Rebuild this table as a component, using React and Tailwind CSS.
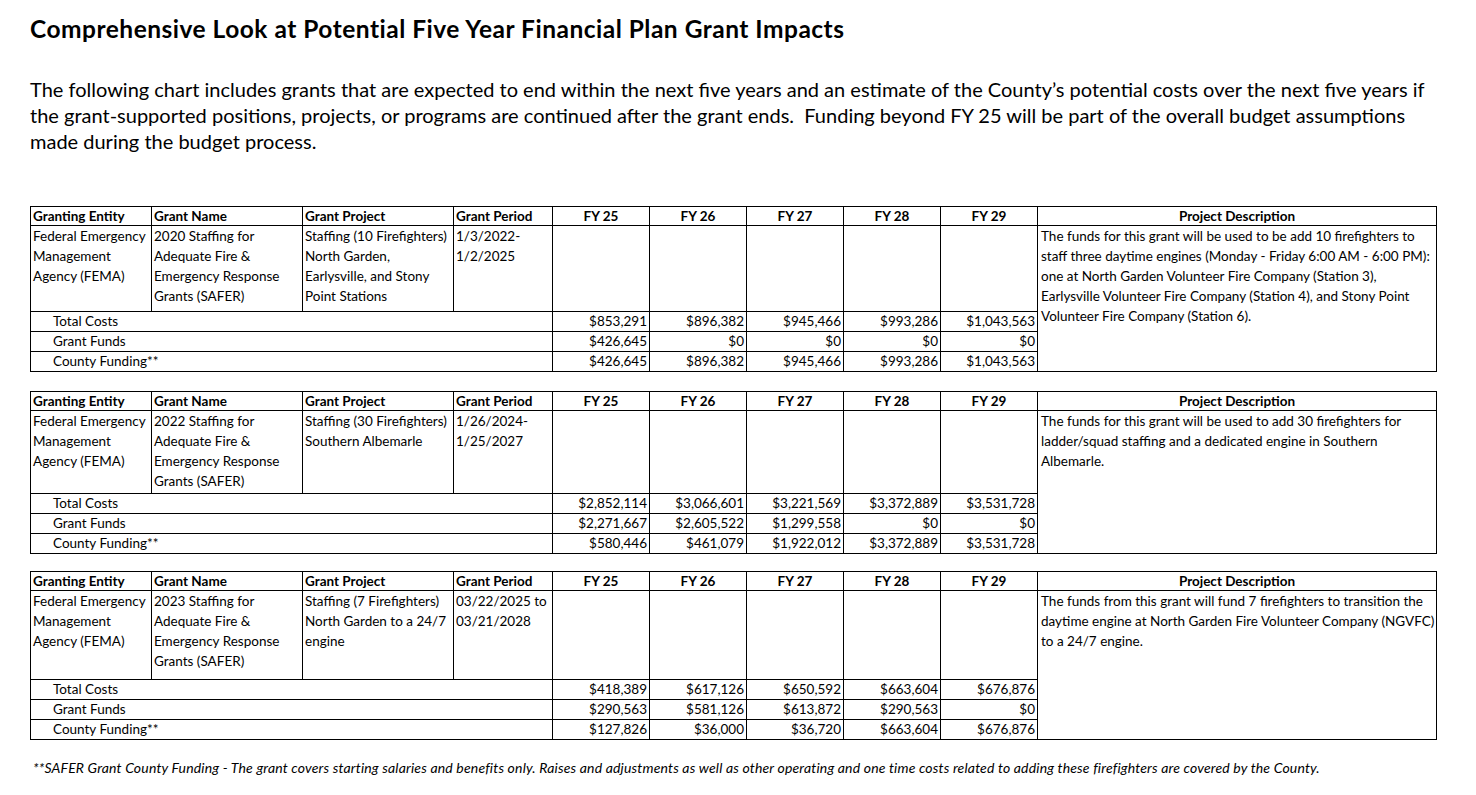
const grants = [
  {
    name: ['2020 Staffing for', 'Adequate Fire &', 'Emergency Response', 'Grants (SAFER)'],
    project: ['Staffing (10 Firefighters)', 'North Garden,', 'Earlysville, and Stony', 'Point Stations'],
    period: ['1/3/2022-', '1/2/2025'],
    desc: [
      'The funds for this grant will be used to be add 10 firefighters to',
      'staff three daytime engines (Monday - Friday 6:00 AM - 6:00 PM):',
      'one at North Garden Volunteer Fire Company (Station 3),',
      'Earlysville Volunteer Fire Company (Station 4), and Stony Point',
      'Volunteer Fire Company (Station 6).',
    ],
    space: 'mt-0',
    infoH: 'h-[86px]',
    rows: [
      ['Total Costs', ['$853,291', '$896,382', '$945,466', '$993,286', '$1,043,563']],
      ['Grant Funds', ['$426,645', '$0', '$0', '$0', '$0']],
      ['County Funding**', ['$426,645', '$896,382', '$945,466', '$993,286', '$1,043,563']],
    ],
  },
  {
    name: ['2022 Staffing for', 'Adequate Fire &', 'Emergency Response', 'Grants (SAFER)'],
    project: ['Staffing (30 Firefighters)', 'Southern Albemarle'],
    period: ['1/26/2024-', '1/25/2027'],
    desc: [
      'The funds for this grant will be used to add 30 firefighters for',
      'ladder/squad staffing and a dedicated engine in Southern',
      'Albemarle.',
    ],
    space: 'mt-[19px]',
    infoH: 'h-[83px]',
    rows: [
      ['Total Costs', ['$2,852,114', '$3,066,601', '$3,221,569', '$3,372,889', '$3,531,728']],
      ['Grant Funds', ['$2,271,667', '$2,605,522', '$1,299,558', '$0', '$0']],
      ['County Funding**', ['$580,446', '$461,079', '$1,922,012', '$3,372,889', '$3,531,728']],
    ],
  },
  {
    name: ['2023 Staffing for', 'Adequate Fire &', 'Emergency Response', 'Grants (SAFER)'],
    project: ['Staffing (7 Firefighters)', 'North Garden to a 24/7', 'engine'],
    period: ['03/22/2025 to', '03/21/2028'],
    desc: [
      'The funds from this grant will fund 7 firefighters to transition the',
      'daytime engine at North Garden Fire Volunteer Company (NGVFC)',
      'to a 24/7 engine.',
    ],
    space: 'mt-[17px]',
    infoH: 'h-[89px]',
    rows: [
      ['Total Costs', ['$418,389', '$617,126', '$650,592', '$663,604', '$676,876']],
      ['Grant Funds', ['$290,563', '$581,126', '$613,872', '$290,563', '$0']],
      ['County Funding**', ['$127,826', '$36,000', '$36,720', '$663,604', '$676,876']],
    ],
  },
];

const years = ['FY 25', 'FY 26', 'FY 27', 'FY 28', 'FY 29'];

function Lines({ items }) {
  return items.map((l, i) => (
    <div key={i} className="whitespace-nowrap">{l}</div>
  ));
}

function GrantTable({ g }) {
  return (
    <table className={`${g.space} w-[1407px] table-fixed border-collapse text-[13.5px] leading-[19px] text-black`}>
      <colgroup>
        <col className="w-[121px]" />
        <col className="w-[151px]" />
        <col className="w-[151px]" />
        <col className="w-[99px]" />
        <col className="w-[97px]" />
        <col className="w-[97px]" />
        <col className="w-[97px]" />
        <col className="w-[97px]" />
        <col className="w-[97px]" />
        <col />
      </colgroup>
      <thead>
        <tr className="h-[18px] font-bold leading-[18px]">
          <th className="border border-black px-[2px] text-left">Granting Entity</th>
          <th className="border border-black px-[2px] text-left">Grant Name</th>
          <th className="border border-black px-[2px] text-left">Grant Project</th>
          <th className="border border-black px-[2px] text-left">Grant Period</th>
          {years.map(y => (
            <th key={y} className="border border-black text-center">{y}</th>
          ))}
          <th className="border border-black text-center">Project Description</th>
        </tr>
      </thead>
      <tbody>
        <tr className={`${g.infoH} align-top leading-[20px]`}>
          <td className="border border-black px-[2px]">
            <Lines items={['Federal Emergency', 'Management', 'Agency (FEMA)']} />
          </td>
          <td className="border border-black px-[2px]"><Lines items={g.name} /></td>
          <td className="border border-black px-[2px]"><Lines items={g.project} /></td>
          <td className="border border-black px-[2px]"><Lines items={g.period} /></td>
          {years.map(y => (
            <td key={y} className="border border-black" />
          ))}
          <td rowSpan={4} className="border border-black px-[3px]">
            <Lines items={g.desc} />
          </td>
        </tr>
        {g.rows.map(([label, vals]) => (
          <tr key={label} className="h-[20px]">
            <td colSpan={4} className="border border-black pl-[22px]">{label}</td>
            {vals.map((v, i) => (
              <td key={i} className="border border-black pr-[2px] text-right">{v}</td>
            ))}
          </tr>
        ))}
      </tbody>
    </table>
  );
}

export default function App() {
  return (
    <div className="min-h-screen w-[1476px] bg-white pl-[30px] pt-[13px] text-black [font-family:Lato,'Open_Sans',sans-serif]">
      <h1 className="text-[24.5px] font-bold leading-[32px] tracking-[0.5px]">
        Comprehensive Look at Potential Five Year Financial Plan Grant Impacts
      </h1>
      <p className="mt-[31px] text-[20px] leading-[26px]">
        <span className="whitespace-nowrap">The following chart includes grants that are expected to end within the next five years and an estimate of the County’s potential costs over the next five years if</span>
        <br />
        <span className="whitespace-nowrap">the grant-supported positions, projects, or programs are continued after the grant ends.&nbsp; Funding beyond FY 25 will be part of the overall budget assumptions</span>
        <br />
        <span>made during the budget process.</span>
      </p>
      <div className="mt-[52px] flex flex-col">
        {grants.map((g, i) => (
          <GrantTable key={i} g={g} />
        ))}
      </div>
      <p className="mt-[19px] pl-[3px] text-[14px] italic leading-[18px] tracking-[0.17px] whitespace-nowrap">
        **SAFER Grant County Funding - The grant covers starting salaries and benefits only. Raises and adjustments as well as other operating and one time costs related to adding these firefighters are covered by the County.
      </p>
    </div>
  );
}
